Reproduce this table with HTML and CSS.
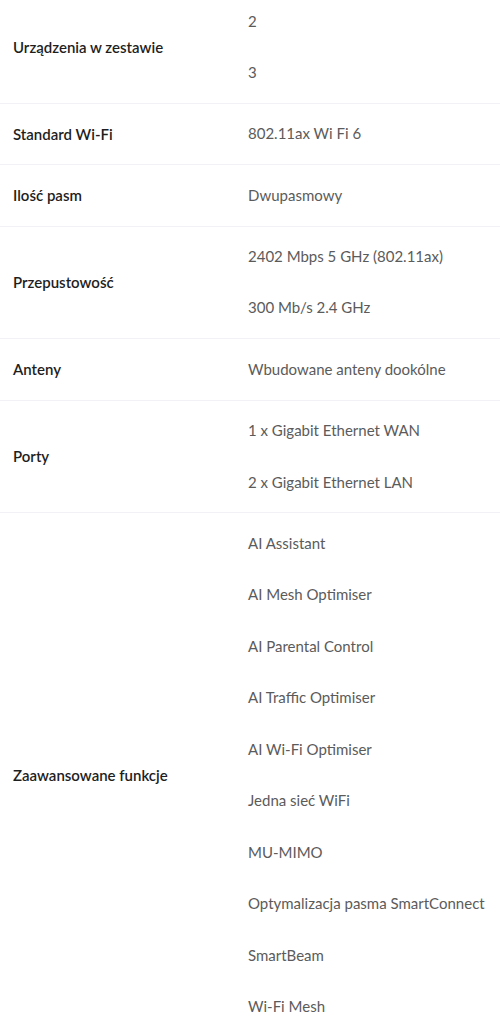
FILE: index.html
```html
<!DOCTYPE html>
<html lang="pl">
<head>
<meta charset="utf-8">
<link rel="stylesheet" href="styles.css">
</head>
<body>
<div class="specs">
  <div class="row first">
    <div class="label">Urządzenia w zestawie</div>
    <div class="values"><div class="v">2</div><div class="v">3</div></div>
  </div>
  <div class="row">
    <div class="label">Standard Wi-Fi</div>
    <div class="values"><div class="v">802.11ax Wi Fi 6</div></div>
  </div>
  <div class="row">
    <div class="label">Ilość pasm</div>
    <div class="values"><div class="v">Dwupasmowy</div></div>
  </div>
  <div class="row">
    <div class="label">Przepustowość</div>
    <div class="values"><div class="v">2402 Mbps 5 GHz (802.11ax)</div><div class="v">300 Mb/s 2.4 GHz</div></div>
  </div>
  <div class="row">
    <div class="label">Anteny</div>
    <div class="values"><div class="v">Wbudowane anteny dookólne</div></div>
  </div>
  <div class="row">
    <div class="label">Porty</div>
    <div class="values"><div class="v">1 x Gigabit Ethernet WAN</div><div class="v">2 x Gigabit Ethernet LAN</div></div>
  </div>
  <div class="row">
    <div class="label">Zaawansowane funkcje</div>
    <div class="values">
      <div class="v">AI Assistant</div>
      <div class="v">AI Mesh Optimiser</div>
      <div class="v">AI Parental Control</div>
      <div class="v">AI Traffic Optimiser</div>
      <div class="v">AI Wi-Fi Optimiser</div>
      <div class="v">Jedna sieć WiFi</div>
      <div class="v">MU-MIMO</div>
      <div class="v">Optymalizacja pasma SmartConnect</div>
      <div class="v">SmartBeam</div>
      <div class="v">Wi-Fi Mesh</div>
    </div>
  </div>
</div>
</body>
</html>
```
FILE: styles.css
```css
html, body {
  margin: 0;
  padding: 0;
  background: #ffffff;
}
body {
  font-family: Lato, "Liberation Sans", sans-serif;
  font-size: 15px;
  overflow: hidden;
}
.specs {
  margin-top: -8.8px;
}
.row {
  display: grid;
  grid-template-columns: 235px 1fr;
  align-items: center;
  padding: 4.4px 0 4.4px 13px;
  border-bottom: 1px solid #f2f2f6;
}
.label {
  font-weight: 600;
  color: #1e1e1e;
  line-height: 21px;
}
.values {
  display: flex;
  flex-direction: column;
}
.v {
  padding: 15px 0;
  line-height: 21.5px;
  color: #5b5b5b;
}
```
